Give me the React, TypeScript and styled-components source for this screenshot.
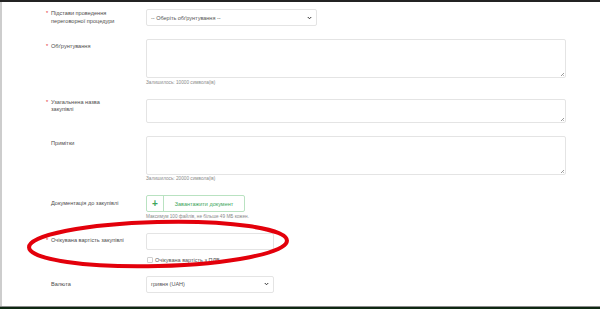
import React from 'react';
import styled, { createGlobalStyle } from 'styled-components';

const GlobalStyle = createGlobalStyle`
  html, body { margin: 0; padding: 0; background: #fff; }
  body { font-family: "Liberation Sans", Arial, sans-serif; }
`;

const Page = styled.div`
  position: relative;
  width: 600px;
  height: 309px;
  box-sizing: border-box;
  border-top: 2px solid #232323;
  display: flex;
  flex-direction: column;
  overflow: hidden;
`;

const Content = styled.div`
  flex: 1;
  border-left: 2px solid #cdcdcd;
  padding: 7px 0 0 44px;
  display: flex;
  flex-direction: column;
  gap: 13px;
`;

const Footer = styled.div`
  height: 2px;
  border-top: 1px solid #8c8c8c;
  background: #0e2812;
`;

const Row = styled.div`
  display: grid;
  grid-template-columns: 100px auto;
  align-items: start;
`;

const Label = styled.div<{ $pt: number }>`
  display: flex;
  padding-top: ${(p) => p.$pt}px;
  font-size: 5.6px;
  line-height: 7.5px;
  color: #4d4d4d;
`;

const Star = styled.span<{ $show: boolean }>`
  width: 5px;
  flex: none;
  color: #e3262b;
  visibility: ${(p) => (p.$show ? 'visible' : 'hidden')};
`;

const Field = styled.div<{ $w: number }>`
  width: ${(p) => p.$w}px;
  display: flex;
  flex-direction: column;
`;

const Box = styled.div<{ $h: number }>`
  position: relative;
  height: ${(p) => p.$h}px;
  box-sizing: border-box;
  border: 1px solid #e4e4e4;
  border-radius: 2px;
  background: #fff;
  display: flex;
  align-items: center;
  padding: 0 4px;
  font-size: 5.5px;
  color: #555;
`;

const Grip = styled.span`
  position: absolute;
  right: 1px;
  bottom: 1px;
  width: 3px;
  height: 3px;
  background: linear-gradient(135deg, transparent 45%, #9a9a9a 50%, transparent 60%, transparent 75%, #9a9a9a 80%, transparent 90%);
`;

const SelectText = styled.span`
  flex: 1;
`;

const Helper = styled.div`
  margin-top: 1.5px;
  font-size: 4.7px;
  line-height: 6px;
  color: #8a8a8a;
`;

const UploadButton = styled.div`
  width: 99px;
  height: 17px;
  box-sizing: border-box;
  border: 1px solid #b9e2c1;
  border-radius: 2px;
  display: flex;
  align-items: stretch;
  color: #3ea65b;
`;

const Plus = styled.span`
  width: 16px;
  border-right: 1px solid #b9e2c1;
  display: flex;
  align-items: center;
  justify-content: center;
  font-size: 10px;
  font-weight: bold;
`;

const UploadText = styled.span`
  flex: 1;
  display: flex;
  align-items: center;
  justify-content: center;
  font-size: 5.5px;
`;

const CheckRow = styled.div`
  margin-top: 7px;
  display: flex;
  align-items: center;
  gap: 2px;
  font-size: 5.5px;
  color: #555;
`;

const Check = styled.span`
  width: 6px;
  height: 6px;
  box-sizing: border-box;
  border: 1px solid #cfcfcf;
  border-radius: 1px;
  margin-left: 1px;
`;

const Overlay = styled.svg`
  position: absolute;
  left: 0;
  top: -2px;
  pointer-events: none;
`;

const Chevron = () => (
  <svg width="5" height="4" viewBox="0 0 10 8">
    <path d="M1.5 2 L5 5.5 L8.5 2" fill="none" stroke="#333" strokeWidth="2" />
  </svg>
);

const App = () => {
  return (
    <>
      <GlobalStyle />
      <Page>
        <Content>
          <Row>
            <Label $pt={1}>
              <Star $show>*</Star>
              <span>Підстави проведення<br />переговорної процедури</span>
            </Label>
            <Field $w={171}>
              <Box $h={17}>
                <SelectText>-- Оберіть обґрунтування --</SelectText>
                <Chevron />
              </Box>
            </Field>
          </Row>

          <Row>
            <Label $pt={4}>
              <Star $show>*</Star>
              <span>Обґрунтування</span>
            </Label>
            <Field $w={420}>
              <Box $h={39}><Grip /></Box>
              <Helper>Залишилось: 10000 символа(ів)</Helper>
            </Field>
          </Row>

          <Row>
            <Label $pt={0}>
              <Star $show>*</Star>
              <span>Узагальнена назва<br />закупівлі</span>
            </Label>
            <Field $w={420}>
              <Box $h={24}><Grip /></Box>
            </Field>
          </Row>

          <Row>
            <Label $pt={4}>
              <Star $show={false}>*</Star>
              <span>Примітки</span>
            </Label>
            <Field $w={420}>
              <Box $h={39}><Grip /></Box>
              <Helper>Залишилось: 20000 символа(ів)</Helper>
            </Field>
          </Row>

          <Row>
            <Label $pt={5}>
              <Star $show={false}>*</Star>
              <span>Документація до закупівлі</span>
            </Label>
            <Field $w={200}>
              <UploadButton>
                <Plus>+</Plus>
                <UploadText>Завантажити документ</UploadText>
              </UploadButton>
              <Helper>Максимум 100 файлів, не більше 49 МБ кожен.</Helper>
            </Field>
          </Row>

          <Row>
            <Label $pt={4}>
              <Star $show>*</Star>
              <span>Очікувана вартість закупівлі</span>
            </Label>
            <Field $w={128}>
              <Box $h={17} />
              <CheckRow>
                <Check />
                <span>Очікувана вартість з ПДВ</span>
              </CheckRow>
            </Field>
          </Row>

          <Row>
            <Label $pt={5}>
              <Star $show={false}>*</Star>
              <span>Валюта</span>
            </Label>
            <Field $w={128}>
              <Box $h={17}>
                <SelectText>гривня (UAH)</SelectText>
                <Chevron />
              </Box>
            </Field>
          </Row>
        </Content>
        <Footer />
        <Overlay width="600" height="309" viewBox="0 0 600 309">
          <ellipse
            cx="158"
            cy="244"
            rx="129"
            ry="22"
            transform="rotate(-1.5 158 244)"
            fill="none"
            stroke="#e3000b"
            strokeWidth="4"
          />
        </Overlay>
      </Page>
    </>
  );
};

export default App;
